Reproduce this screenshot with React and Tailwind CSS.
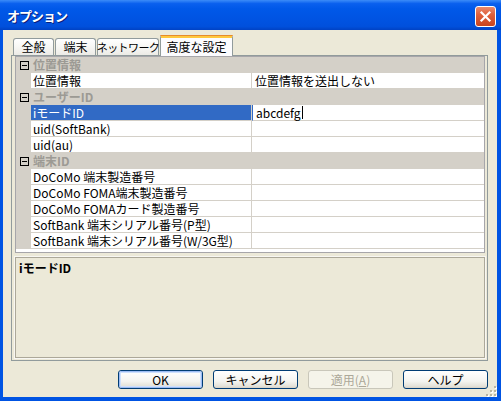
import React from "react";

const rows = [
  { type: "cat", label: "位置情報" },
  { type: "prop", label: "位置情報", value: "位置情報を送出しない" },
  { type: "cat", label: "ユーザーID" },
  { type: "prop", label: "iモードID", value: "abcdefg", selected: true },
  { type: "prop", label: "uid(SoftBank)", value: "" },
  { type: "prop", label: "uid(au)", value: "" },
  { type: "cat", label: "端末ID" },
  { type: "prop", label: "DoCoMo 端末製造番号", value: "" },
  { type: "prop", label: "DoCoMo FOMA端末製造番号", value: "" },
  { type: "prop", label: "DoCoMo FOMAカード製造番号", value: "" },
  { type: "prop", label: "SoftBank 端末シリアル番号(P型)", value: "" },
  { type: "prop", label: "SoftBank 端末シリアル番号(W/3G型)", value: "" },
];

function MinusBox() {
  return (
    <svg width="9" height="9" viewBox="0 0 9 9" className="block">
      <rect x="0.5" y="0.5" width="8" height="8" fill="none" stroke="#000" strokeWidth="1" />
      <line x1="2" y1="4.5" x2="7" y2="4.5" stroke="#000" strokeWidth="1" />
    </svg>
  );
}

function Row({ row }) {
  if (row.type === "cat") {
    return (
      <div className="flex h-[16px] bg-[#D4D0C8]">
        <div className="w-[15px] flex items-center justify-center pl-[1px]">
          <MinusBox />
        </div>
        <div className="pl-[2px] font-bold text-[#9C9A94] text-[12px] leading-[16px]">{row.label}</div>
      </div>
    );
  }
  return (
    <div className="flex h-[16px]">
      <div className="w-[15px] bg-[#D4D0C8]" />
      <div
        className={
          "w-[221px] border-r border-b border-[#D4D0C8] pl-[2px] text-[12px] leading-[15px] whitespace-nowrap overflow-hidden " +
          (row.selected ? "bg-[#316AC5] text-white" : "bg-white text-black")
        }
      >
        {row.label}
      </div>
      <div
        className={
          "flex-1 border-b border-[#D4D0C8] pl-[3px] text-[12px] leading-[15px] whitespace-nowrap bg-white text-black flex items-center " +
          (row.selected ? "border-l border-l-[#316AC5] pl-[2px]" : "")
        }
      >
        <span>{row.value}</span>
        {row.selected && <span className="inline-block w-[1px] h-[13px] bg-black ml-[1px]" />}
      </div>
    </div>
  );
}

function Tab({ label, w, selected, tight }) {
  if (selected) {
    return (
      <div
        className={`${w} h-[21px] -mb-[1px] relative z-10 bg-[#FCFCFE] border-x border-[#919B9C] rounded-t-[3px] flex flex-col`}
      >
        <div className="h-[1px] bg-[#E68B2C] rounded-t-[3px] -mx-[1px]" />
        <div className="h-[2px] bg-[#FFC83C]" />
        <div className="flex-1 flex items-center justify-center text-[12px] leading-[14px] text-black pb-[1px] whitespace-nowrap">
          {label}
        </div>
      </div>
    );
  }
  return (
    <div
      className={`${w} h-[17px] border-t border-x border-[#919B9C] rounded-t-[3px] bg-[linear-gradient(180deg,#FFFFFF_0%,#F7F7F4_50%,#ECEBE6_100%)] flex items-center justify-center leading-[14px] text-black whitespace-nowrap ${tight ? "text-[11px] tracking-[-0.6px]" : "text-[12px]"}`}
    >
      {label}
    </div>
  );
}

function Button({ children, isDefault, disabled }) {
  if (disabled) {
    return (
      <div className="w-[85px] h-[19px] rounded-[3px] border border-[#C9C7BA] bg-[#F5F4EA] flex items-center justify-center text-[12px] leading-[14px] text-[#ACA899]">
        {children}
      </div>
    );
  }
  return (
    <div className="w-[85px] h-[19px] rounded-[3px] border border-[#003C74] bg-[linear-gradient(180deg,#FFFFFF_0%,#F4F4F0_60%,#E3E1D8_90%,#D6D0C5_100%)] flex items-center justify-center text-[12px] leading-[14px] text-black">
      <div
        className={
          "w-full h-full flex items-center justify-center rounded-[2px] " +
          (isDefault ? "border border-[#9CBCF4] shadow-[inset_0_0_0_1px_#CEE0FC]" : "")
        }
      >
        {children}
      </div>
    </div>
  );
}

export default function App() {
  return (
    <div className="w-[501px] h-[401px] bg-[#0054E3] flex flex-col font-['Noto_Sans_CJK_JP','Noto_Sans',sans-serif] overflow-hidden">
      {/* Title bar */}
      <div className="h-[30px] flex items-center justify-between pl-[7px] pr-[5px] bg-[linear-gradient(180deg,#3C8CF8_0%,#0A60EE_12%,#0058E8_30%,#0054E3_60%,#0050DC_88%,#0042C4_100%)]">
        <div className="text-white font-bold text-[13px] leading-[16px] tracking-[-1px] [text-shadow:1px_1px_0_#0A1E7A] pt-[1px]">
          オプション
        </div>
        <div className="w-[21px] h-[21px] rounded-[3px] border border-white bg-[linear-gradient(180deg,#E98A6C_0%,#E0603C_40%,#C8441E_100%)] flex items-center justify-center mt-[2px]">
          <svg width="13" height="13" viewBox="0 0 13 13">
            <line x1="2.5" y1="2.5" x2="10.5" y2="10.5" stroke="#fff" strokeWidth="2.2" strokeLinecap="square" />
            <line x1="10.5" y1="2.5" x2="2.5" y2="10.5" stroke="#fff" strokeWidth="2.2" strokeLinecap="square" />
          </svg>
        </div>
      </div>

      {/* Content */}
      <div className="relative ml-[3px] mr-[4px] h-[367px] bg-[#ECE9D8] pt-[5px] flex flex-col">
        {/* Tabs */}
        <div className="flex items-end gap-[1px] pl-[10px] h-[20px]">
          <Tab label="全般" w="w-[41px]" />
          <Tab label="端末" w="w-[41px]" />
          <Tab label="ネットワーク" w="w-[62px]" tight />
          <Tab label="高度な設定" w="w-[73px]" selected />
        </div>

        {/* Panel */}
        <div className="ml-[8px] w-[477px] h-[306px] border border-[#919B9C] bg-[#ECE9D8] pl-[3px] pr-[2px] pb-[2px] flex flex-col">
          {/* Grid */}
          <div className="h-[197px] border border-[#A7A6AA] bg-white flex flex-col overflow-hidden">
            {rows.map((r, i) => (
              <Row key={i} row={r} />
            ))}
          </div>
          {/* Description */}
          <div className="mt-[4px] h-[101px] border border-[#ACA899] shadow-[0_0_0_1px_#F8F7F2] bg-[#ECE9D8] pl-[3px] pt-[3px]">
            <div className="font-bold text-[12px] leading-[14px] text-black">iモードID</div>
          </div>
        </div>

        {/* Buttons */}
        <div className="mt-[9px] flex justify-end gap-[10px] pr-[9px]">
          <Button isDefault>OK</Button>
          <Button>キャンセル</Button>
          <Button disabled>
            適用(<span className="underline">A</span>)
          </Button>
          <Button>ヘルプ</Button>
        </div>

        {/* Size grip */}
        <svg
          width="11"
          height="11"
          viewBox="0 0 11 11"
          className="absolute right-[0px] bottom-[0px]"
        >
          {[
            [8, 0],
            [8, 4],
            [4, 4],
            [8, 8],
            [4, 8],
            [0, 8],
          ].map(([x, y], i) => (
            <g key={i}>
              <rect x={x + 1} y={y + 1} width="2" height="2" fill="#FFFFFF" />
              <rect x={x} y={y} width="2" height="2" fill="#B8B4A2" />
            </g>
          ))}
        </svg>
      </div>
    </div>
  );
}
